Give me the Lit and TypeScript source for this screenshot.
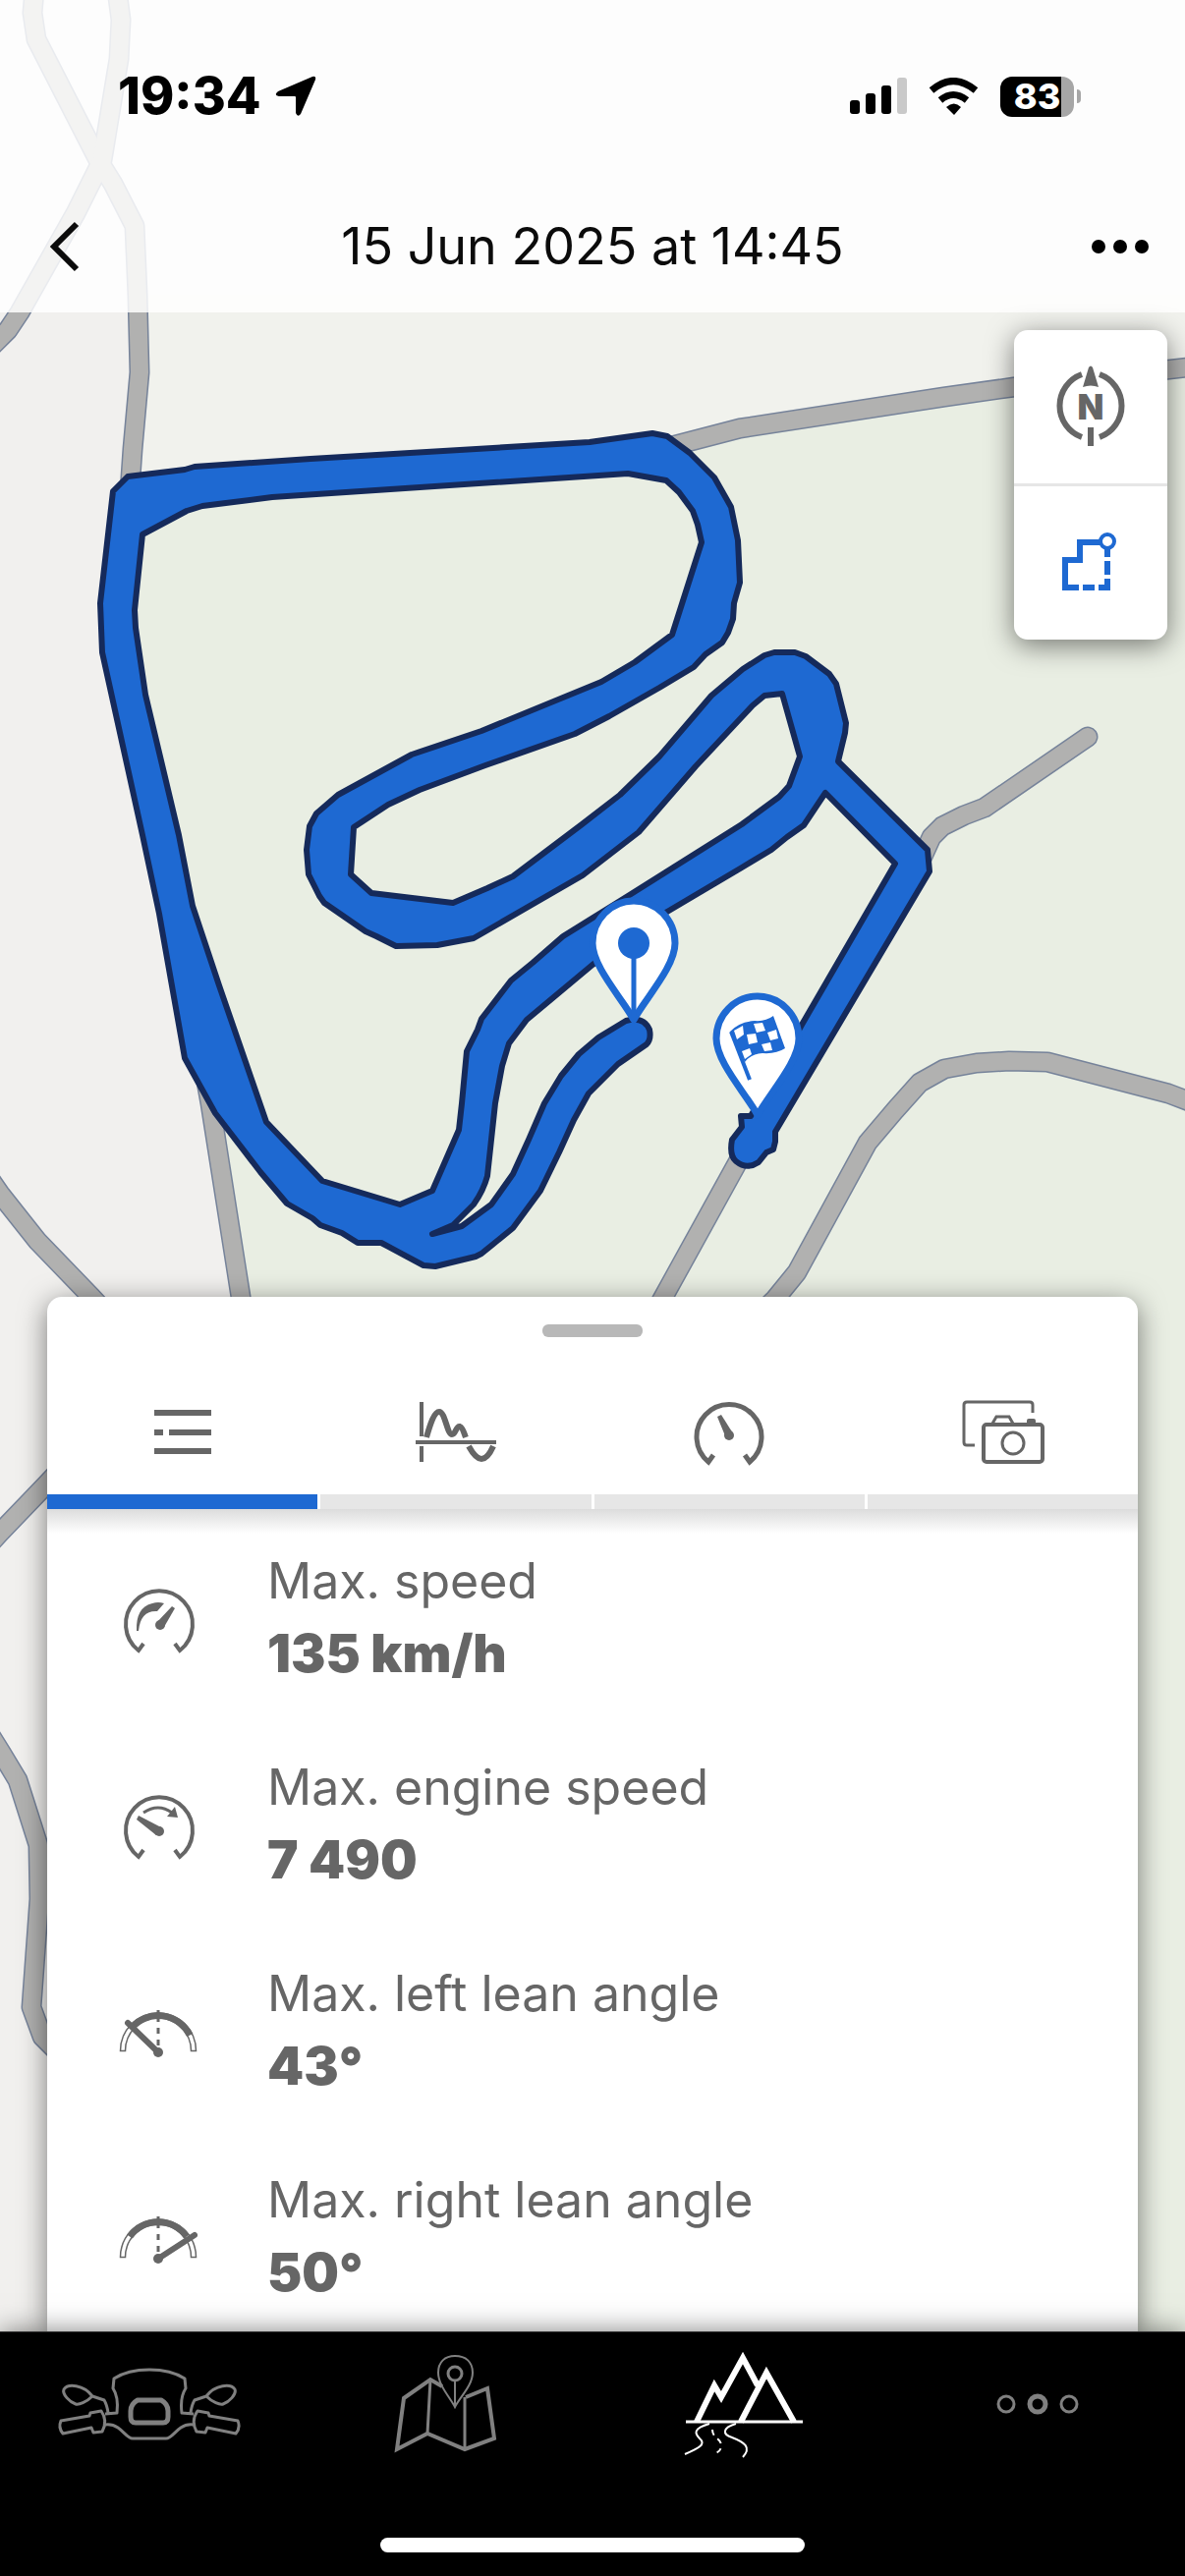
import { LitElement, html, css, svg, nothing } from "lit";
import { customElement, property, state } from "lit/decorators.js";
import { classMap } from "lit/directives/class-map.js";

const ROADS = [
  "M35 -10 L33 13 L37 40 L100 163 L115 187 L137 230 L140 300 L142 379 L135 457 L132 500",
  "M119 -10 L123 20 L121 60 L104 163 L77 217 L20 318 L8 336 L-12 356",
  "M680 455 L753 436 L961 404 L1032 394 L1226 372",
  "M1107 750 L1002 822 L981 830 L959 841 L948 852 L938 874",
  "M758 1170 L640 1384",
  "M1226 1127 L1189 1113 L1066 1081 L1027 1080 L994 1082 L961 1088 L936 1102 L911 1130 L883 1163 L811 1295 L789 1322 L760 1350",
  "M208 1090 L214 1123 L245 1320 L252 1370",
  "M-20 1186 L0 1215 L38 1263 L93 1320 L130 1360",
  "M-20 1582 L0 1560 L48 1510 L80 1476",
  "M-20 1750 L0 1782 L18 1812 L39 1878 L40 1933 L32 2043 L43 2073 L70 2100",
];

const TRACK_OUTER =
  "M130 485 L188 478 L198 475 L316 467 L600 450 L664 441 L679 444 L702 461 L727 486 L744 516 L751 550 L753 593 L747 614 L746 630 L741 644 L735 654 L718 666 L706 679 L671 700 L620 729 L585 747 L494 779 L427 804 L395 819 L360 842 L357 890 L378 909 L461 919 L496 904 L522 892 L591 840 L631 809 L671 770 L724 708 L756 681 L778 667 L788 664 L809 664 L820 668 L844 686 L851 696 L861 736 L860 746 L853 775 L944 865 L946 887 L789 1152 L789 1162 L787 1170 L780 1173 L772 1183 Q760 1191 749 1182 Q742 1176 745 1160 L755 1147 L754 1136 L764 1136 L816 1043 L911 879 L840 807 L834 816 L818 840 L801 852 L785 865 L755 883 L679 928 L603 982 L536 1038 L518 1062 L511 1085 L504 1123 L496 1197 Q492 1212 482 1226 L461 1247 L440 1256 L470 1248 L500 1226 L522 1195 L538 1160 L554 1123 L571 1095 L589 1073 L609 1056 L637 1039 Q655 1034 661 1048 Q663 1058 658 1063 L629 1083 L612 1100 L599 1113 L584 1140 L569 1173 L550 1212 L522 1250 L490 1276 L484 1279 L443 1289 L431 1288 L388 1265 L364 1265 L348 1255 L326 1247 L318 1240 L292 1225 L265 1193 L219 1133 L188 1077 L162 930 L145 850 L104 664 L102 614 L115 500 Z";

const TRACK_INNER =
  "M145 544 L190 520 L206 515 L277 506 L639 482 L678 489 L691 501 L705 520 L710 534 L714 552 L684 646 L646 674 L612 694 L490 744 L419 768 L344 809 L322 828 L315 841 L312 865 L314 890 L325 912 L330 919 L372 948 L383 953 L403 963 L445 962 L482 955 L593 891 L650 847 L708 780 L766 718 L778 708 L796 706 L814 770 L803 800 L793 811 L755 839 L639 912 L573 953 L542 980 L520 998 L490 1037 L486 1048 L475 1070 L470 1123 L467 1150 L440 1212 L407 1226 L328 1202 L271 1142 L223 1003 L196 922 L182 850 L148 707 L138 639 L137 621 Z";

const PIN = "M645 1038 C633 1016 603 984 603 960 A42 43 0 0 1 687 960 C687 984 657 1016 645 1038 Z";

const FLAG_SQUARES = [
  "M747 1049 L756 1044 L757 1053 L750 1058 Z",
  "M767 1042 L776 1041 L779 1049 L770 1051 Z",
  "M760 1053 L769 1052 L771 1061 L762 1063 Z",
  "M781 1051 L790 1048 L792 1057 L784 1059 Z",
  "M775 1063 L784 1061 L786 1069 L778 1070 Z",
  "M755 1070 L763 1067 L765 1073 L758 1078 Z",
];

@customElement("route-map")
class RouteMap extends LitElement {
  static styles = css`
    :host { display: block; }
    .canvas { display: block; width: 100%; height: 100%; }
    .land { fill: #f1f0ee; }
    .meadow { fill: #f1f2ed; }
    .park { fill: #e9eee3; }
    .road-edge, .road { fill: none; stroke-linecap: round; stroke-linejoin: round; }
    .road-edge { stroke: #76839a; stroke-width: 21; }
    .road { stroke: #b1b1b0; stroke-width: 18; }
    .track { fill: #1e69d2; stroke: #152a5b; stroke-width: 6; stroke-linejoin: round; }
    .pin { fill: #fff; stroke: #1e69d2; stroke-width: 7; stroke-linejoin: round; }
    .blue { fill: #1e69d2; }
    .white { fill: #fff; }
    .stem { stroke: #1e69d2; stroke-width: 5; }
    .pole { stroke: #1e69d2; stroke-width: 4; }
  `;

  render() {
    return html`
      <svg class="canvas" viewBox="0 0 1206 2373" preserveAspectRatio="xMidYMin slice" role="img" aria-label="Recorded route">
        <rect class="land" width="1206" height="2373" />
        <path class="meadow" d="M141 300 H1206 V520 H141 Z" />
        <path class="park" d="M132 486 L680 455 L753 436 L961 404 L1206 374 V2373 H400 L245 1320 L214 1123 L172 900 L120 640 L120 520 Z" />
        ${ROADS.map((d) => svg`<path class="road-edge" d=${d} />`)}
        ${ROADS.map((d) => svg`<path class="road" d=${d} />`)}
        <path class="track" fill-rule="evenodd" d="${TRACK_OUTER} ${TRACK_INNER}" />
        <path class="pin" d=${PIN} />
        <circle class="blue" cx="645" cy="960" r="16" />
        <path class="stem" d="M645 970 V1034" />
        <path class="pin" d=${PIN} transform="translate(126 97)" />
        <path class="pole" d="M744 1050 L763 1099" />
        <path class="blue" d="M743 1050 Q752 1040 768 1039 Q779 1040 787 1034 L799 1067 Q790 1073 776 1072 Q764 1073 758 1081 Z" />
        ${FLAG_SQUARES.map((d) => svg`<path class="white" d=${d} />`)}
      </svg>
    `;
  }
}

const gaugeRing = (cx: number, cy: number, r: number, w: number) => svg`
  <path fill="none" stroke="currentColor" stroke-width=${w}
    d="M${cx - 16} ${cy + 19} L${cx - 21} ${cy + 26} A${r} ${r} 0 1 1 ${cx + 21} ${cy + 26} L${cx + 16} ${cy + 19}" />`;

const leanScale = (band: string) => svg`
  <path fill="none" stroke="currentColor" stroke-width="1.5" d="M1.5 61.5 A38.5 38.5 0 0 1 78.5 61.5 H73.5 A33.5 33.5 0 0 0 6.5 61.5 Z" />
  <path fill="none" stroke="currentColor" stroke-width="3" d="M40 20 V32 M40 38 V44 M40 50 V56" />
  <path fill="none" stroke="currentColor" stroke-width="7" d=${band} />`;

const ROW_ICONS: Record<string, unknown> = {
  speed: svg`
    ${gaugeRing(41, 48, 34, 4)}
    <path fill="currentColor" d="M18 54 Q17 30 34 26 Q40 24 46 26 L39 34 Q22 33 20 54 Z" />
    <circle fill="currentColor" cx="42" cy="48" r="5" />
    <path fill="currentColor" d="M38 46 L54 29 L57 31 L46 50 Z" />`,
  rpm: svg`
    ${gaugeRing(41, 48, 34, 4)}
    <circle fill="currentColor" cx="41" cy="48" r="5" />
    <path fill="currentColor" d="M43 44 L20 32 L18 36 L38 52 Z" />
    <path fill="none" stroke="currentColor" stroke-width="3" d="M25 29 Q40 19 54 29" />
    <path fill="currentColor" d="M57 23 L60 34 L49 33 Z" />`,
  left: svg`
    ${leanScale("M13.3 37.5 A36 36 0 0 1 72.3 45.5")}
    <path stroke="currentColor" stroke-width="6" stroke-linecap="round" d="M40 63 L9 33" />
    <circle fill="currentColor" cx="40" cy="63" r="5" />`,
  right: svg`
    ${leanScale("M11 40.5 A36 36 0 0 1 69 40.5")}
    <path stroke="currentColor" stroke-width="6" stroke-linecap="round" d="M40 63 L77 39" />
    <circle fill="currentColor" cx="40" cy="63" r="5" />`,
};

const TAB_ICONS: Record<string, unknown> = {
  list: svg`<path stroke="currentColor" stroke-width="6" d="M15 14 H73 M15 34 H24 M30 34 H73 M15 53 H73" />`,
  chart: svg`
    <path fill="none" stroke="currentColor" stroke-width="4" d="M9 3 V38 M9 48 V64 M3 44 H85" />
    <path fill="none" stroke="currentColor" stroke-width="6"
      d="M14 39 C18 25 22 13 27 13 C33 13 35 36 40 36 C44 36 44 27 48 28 C51 29 52 34 54 39 M57 48 C62 57 66 61 70 61 C74 61 78 57 82 48" />`,
  gauge: svg`
    ${gaugeRing(44, 38, 33, 5)}
    <circle fill="currentColor" cx="44" cy="37" r="5" />
    <path fill="currentColor" d="M41 40 L32 18 L36 16 L48 35 Z" />`,
  photos: svg`
    <path fill="none" stroke="currentColor" stroke-width="3" d="M16 47 H8 Q5 47 5 44 V6 Q5 3 8 3 H72 Q75 3 75 6 V14" />
    <rect fill="none" stroke="currentColor" stroke-width="4" x="25" y="26" width="60" height="38" rx="3" />
    <circle fill="none" stroke="currentColor" stroke-width="3" cx="55" cy="45" r="11" />
    <path fill="none" stroke="currentColor" stroke-width="3" d="M34 25 L38 18 H51 L55 25" />
    <path fill="currentColor" d="M69 25 V22 Q69 20 71 20 H76 Q78 20 78 22 V25 Z" />`,
};

const HANDLEBAR_HALF =
  "M6 74 L35 69 L36 66 L47 64 Q54 74 48 85 L39 86 L37 81 L8 87 Q3 81 6 74 Z M9 42 C13 36 29 37 38 49 C32 55 24 58 21 57 C15 55 7 47 9 42 Z M38 49 Q44 51 50 53 Q53 58 54 66 M51 67 L63 66 Q65 50 59 41 L60 31 Q74 22 96 22 M51 78 Q58 77 64 81 C70 85 74 92 79 92 L96 92";

const NAV_ICONS: Record<string, unknown> = {
  bike: svg`
    <g fill="none" stroke="currentColor" stroke-width="3" stroke-linejoin="round">
      <path d=${HANDLEBAR_HALF} />
      <path d=${HANDLEBAR_HALF} transform="translate(192 0) scale(-1 1)" />
      <path stroke-width="5" d="M84 53 H108 Q115 57 115 64 V70 Q115 76 110 76 H82 Q77 76 77 70 V64 Q77 57 84 53 Z" />
    </g>`,
  map: svg`
    <g fill="none" stroke="currentColor">
      <path stroke-width="4" d="M93 39 L81 32 L54 51 L47 103 L78 87 L116 103 L146 92 L139 41 L117 50" />
      <path stroke-width="3" d="M81 32 L78 87 M116 50 V103" />
      <path stroke-width="2" d="M106 60 C101 50 89 38 89 25 C89 14 96 8 106 8 C117 8 124 14 124 25 C124 38 111 50 106 60 Z M106 32 V59" />
      <circle stroke-width="3" cx="106" cy="26" r="7" />
    </g>`,
  trips: svg`
    <g fill="none" stroke="currentColor">
      <path stroke-width="6" d="M50 75 L68 38 L75 50 L97 10 L112 38 M95 75 L121 25 L149 75" />
      <path stroke-width="3" d="M39 75 H158" />
      <path stroke-width="2" d="M63 77 C46 82 48 87 53 92 C60 98 52 102 38 108 M90 77 C76 81 76 88 86 91 C99 96 106 101 97 111" />
      <path stroke-width="2" stroke-dasharray="6 5" d="M66 83 C66 92 75 92 75 99 C75 103 73 106 69 107" />
    </g>`,
  more: svg`
    <g fill="none" stroke="currentColor">
      <circle stroke-width="3" cx="64" cy="57" r="8" />
      <circle stroke-width="5" cx="96" cy="57" r="8" />
      <circle stroke-width="3" cx="128" cy="57" r="8" />
    </g>`,
};

@customElement("ride-stat")
class RideStat extends LitElement {
  @property() icon = "speed";
  @property() label = "";
  @property() value = "";

  static styles = css`
    :host { display: flex; align-items: center; gap: 71px; color: #666; }
    .icon { width: 80px; height: 80px; flex: none; }
    .label, .value { line-height: 74px; white-space: nowrap; }
    .label { font-size: 50px; font-weight: 400; }
    .value { font-size: 53px; font-weight: 900; }
  `;

  render() {
    return html`
      <svg class="icon" viewBox="0 0 80 80" aria-hidden="true">${ROW_ICONS[this.icon]}</svg>
      <div>
        <div class="label">${this.label}</div>
        <div class="value">${this.value}</div>
      </div>
    `;
  }
}

@customElement("app-root")
class AppRoot extends LitElement {
  @state() private tab = "list";

  private tabs = [
    { id: "list", label: "Summary" },
    { id: "chart", label: "Charts" },
    { id: "gauge", label: "Ride data" },
    { id: "photos", label: "Photos" },
  ];

  private stats = [
    { icon: "speed", label: "Max. speed", value: "135 km/h" },
    { icon: "rpm", label: "Max. engine speed", value: "7 490" },
    { icon: "left", label: "Max. left lean angle", value: "43°" },
    { icon: "right", label: "Max. right lean angle", value: "50°" },
  ];

  private links = [
    { id: "bike", label: "Motorcycle" },
    { id: "map", label: "Map" },
    { id: "trips", label: "Trips" },
    { id: "more", label: "More" },
  ];

  static styles = css`
    :host {
      display: flex;
      flex-direction: column;
      min-height: 100vh;
      background: #000;
      font-family: Inter, "Liberation Sans", sans-serif;
    }
    * { box-sizing: border-box; }
    button { border: 0; padding: 0; margin: 0; background: none; color: inherit; font: inherit; }
    svg { display: block; }
    .stage { position: relative; flex: 1; display: flex; flex-direction: column; overflow: hidden; isolation: isolate; }
    .map { position: absolute; inset: 0; z-index: -1; }

    .top { background: rgba(255, 255, 255, 0.84); color: #000; }
    .status { display: flex; justify-content: space-between; align-items: center; height: 184px; padding: 12px 106px 0 120px; }
    .clock { display: flex; align-items: center; gap: 14px; font-size: 52px; line-height: 60px; font-weight: 800; }
    .signals { display: flex; align-items: center; gap: 22px; }
    .battery { display: flex; align-items: center; gap: 3px; }
    .cell {
      width: 75px; height: 41px; border-radius: 12px;
      background: linear-gradient(to right, #000 83%, #a6a6a6 83%);
      color: #fff; font-size: 36px; line-height: 41px; font-weight: 800; text-align: center;
    }
    .nub { width: 4px; height: 14px; border-radius: 0 4px 4px 0; background: #a6a6a6; }
    .titlebar { display: grid; grid-template-columns: 1fr auto 1fr; align-items: center; height: 134px; padding: 0 32px; }
    .title { margin: 0; font-size: 52px; line-height: 60px; font-weight: 400; color: #0b0b0b; }
    .more { justify-self: end; }

    .controls {
      align-self: flex-end; margin: 18px 18px 0 0; width: 156px;
      background: #fff; border-radius: 14px; box-shadow: 0 6px 28px rgba(0, 0, 0, 0.5); color: #666;
    }
    .control { display: grid; place-items: center; width: 100%; height: 156px; }
    .control + .control { height: 159px; border-top: 3px solid #e6e6e6; color: #1e69d2; }
    .north { font-size: 35px; font-weight: 900; }

    .sheet {
      margin: auto 48px 0; background: #fff; border-radius: 15px 15px 0 0;
      box-shadow: 0 6px 28px rgba(0, 0, 0, 0.5); overflow: hidden;
    }
    .handle { width: 102px; height: 13px; margin: 28px auto 0; border-radius: 6px; background: #b8b8b8; }
    .tabs { display: grid; grid-template-columns: repeat(4, 1fr); gap: 3px; padding-top: 63px; color: #666; }
    .tab { display: flex; flex-direction: column; align-items: center; gap: 29px; }
    .tab::after { content: ""; width: 100%; height: 15px; background: #e6e6e6; }
    .tab.active::after { background: #1e69d2; }
    .stats {
      display: flex; flex-direction: column; gap: 62px; margin: 0; padding: 36px 73px 23px; list-style: none;
      background: linear-gradient(#dcdcdc, #fff 25px);
    }

    .nav {
      position: relative; background: #000; color: #808080; border-top: 1px solid #333;
      box-shadow: 0 0 26px rgba(0, 0, 0, 0.5);
    }
    .links { display: grid; grid-template-columns: repeat(4, 1fr); padding: 16px 0 73px; }
    .link { display: grid; justify-content: center; color: inherit; }
    .link.active { color: #fff; }
    .home { width: 432px; height: 15px; margin: 0 auto 24px; border-radius: 8px; background: #fff; }
  `;

  render() {
    return html`
      <main class="stage">
        <route-map class="map"></route-map>
        <header class="top">
          <div class="status">
            <div class="clock">
              <span>19:34</span>
              <svg width="42" height="42" viewBox="0 0 42 42" aria-hidden="true">
                <path d="M38 1 Q42 0 41 4 L26 39 Q23 43 21 38 V22 Q21 21 20 21 H4 Q-2 20 3 16 Z" />
              </svg>
            </div>
            <div class="signals">
              <svg width="58" height="38" viewBox="0 0 58 38" aria-hidden="true">
                <rect x="0" y="23" width="10" height="14" rx="3" />
                <rect x="16" y="16" width="10" height="21" rx="3" />
                <rect x="32" y="8" width="10" height="29" rx="3" />
                <rect x="48" y="0" width="10" height="37" rx="3" fill="#c9c9c9" />
              </svg>
              <svg width="51" height="38" viewBox="0 0 51 38" aria-hidden="true">
                <path d="M26 38 L18 30 Q26 23 33 30 Z" />
                <path fill="none" stroke="#000" stroke-width="7" d="M12 23 Q25 12 39 23 M3 13 Q25 -6 48 13" />
              </svg>
              <div class="battery"><div class="cell">83</div><div class="nub"></div></div>
            </div>
          </div>
          <div class="titlebar">
            <button aria-label="Back">
              <svg width="68" height="60" viewBox="0 0 68 60"><path fill="none" stroke="#0b0b0b" stroke-width="6" d="M46 7 L23 30 L46 53" /></svg>
            </button>
            <h1 class="title">15 Jun 2025 at 14:45</h1>
            <button class="more" aria-label="More options">
              <svg width="68" height="60" viewBox="0 0 68 60">
                <circle cx="12" cy="30" r="7" /><circle cx="34" cy="30" r="7" /><circle cx="56" cy="30" r="7" />
              </svg>
            </button>
          </div>
        </header>

        <div class="controls">
          <button class="control" aria-label="Face north">
            <svg width="90" height="90" viewBox="0 0 90 90">
              <path fill="none" stroke="currentColor" stroke-width="6" d="M36 12 A34 34 0 0 0 36 76 M54 12 A34 34 0 0 1 54 76" />
              <path fill="currentColor" d="M43 5 Q45 2 47 5 L53 25 Q45 22 37 25 Z M42 66 H48 V85 H42 Z" />
              <text class="north" x="45" y="58" text-anchor="middle" fill="currentColor">N</text>
            </svg>
          </button>
          <button class="control" aria-label="Show whole route">
            <svg width="90" height="90" viewBox="0 0 90 90">
              <path fill="none" stroke="currentColor" stroke-width="6"
                d="M55 24 H34 V42 H19 V70 H33 M37 70 H49 M53 70 H62 V61 M62 57 V43 M62 39 V30" />
              <circle fill="none" stroke="currentColor" stroke-width="4" cx="62" cy="23" r="7" />
            </svg>
          </button>
        </div>

        <section class="sheet">
          <div class="handle"></div>
          <div class="tabs" role="tablist">
            ${this.tabs.map(
              (t) => html`
                <button class=${classMap({ tab: true, active: t.id === this.tab })} role="tab" aria-label=${t.label}
                  aria-selected=${t.id === this.tab ? "true" : "false"} @click=${() => (this.tab = t.id)}>
                  <svg width="88" height="68" viewBox="0 0 88 68">${TAB_ICONS[t.id]}</svg>
                </button>
              `,
            )}
          </div>
          <ul class="stats">
            ${this.stats.map((s) => html`<li><ride-stat icon=${s.icon} label=${s.label} value=${s.value}></ride-stat></li>`)}
          </ul>
        </section>
      </main>

      <nav class="nav">
        <div class="links">
          ${this.links.map(
            (l) => html`
              <a class=${classMap({ link: true, active: l.id === "trips" })} href="#${l.id}" aria-label=${l.label}
                aria-current=${l.id === "trips" ? "page" : nothing}>
                <svg width="190" height="120" viewBox="0 0 190 120">${NAV_ICONS[l.id]}</svg>
              </a>
            `,
          )}
        </div>
        <div class="home"></div>
      </nav>
    `;
  }
}
